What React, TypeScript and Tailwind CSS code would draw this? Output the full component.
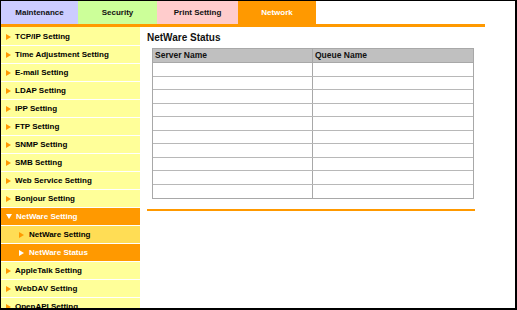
import React from 'react';

const tabs = [
  { label: 'Maintenance', w: 'w-[77px]', bg: 'bg-[#ccccff]', text: 'text-[#111]' },
  { label: 'Security', w: 'w-[79px]', bg: 'bg-[#ccff99]', text: 'text-[#111]' },
  { label: 'Print Setting', w: 'w-[81px]', bg: 'bg-[#ffcccc]', text: 'text-[#111]' },
  { label: 'Network', w: 'w-[78px]', bg: 'bg-[#ff9900]', text: 'text-white' },
];

type Item = { label: string; kind: 'normal' | 'open' | 'sub' | 'subActive' };

const menu: Item[] = [
  { label: 'TCP/IP Setting', kind: 'normal' },
  { label: 'Time Adjustment Setting', kind: 'normal' },
  { label: 'E-mail Setting', kind: 'normal' },
  { label: 'LDAP Setting', kind: 'normal' },
  { label: 'IPP Setting', kind: 'normal' },
  { label: 'FTP Setting', kind: 'normal' },
  { label: 'SNMP Setting', kind: 'normal' },
  { label: 'SMB Setting', kind: 'normal' },
  { label: 'Web Service Setting', kind: 'normal' },
  { label: 'Bonjour Setting', kind: 'normal' },
  { label: 'NetWare Setting', kind: 'open' },
  { label: 'NetWare Setting', kind: 'sub' },
  { label: 'NetWare Status', kind: 'subActive' },
  { label: 'AppleTalk Setting', kind: 'normal' },
  { label: 'WebDAV Setting', kind: 'normal' },
  { label: 'OpenAPI Setting', kind: 'normal' },
];

function RightArrow({ color }: { color: string }) {
  return (
    <svg width="5" height="6" viewBox="0 0 5 6" className="shrink-0">
      <polygon points="0,0 5,3 0,6" fill={color} />
    </svg>
  );
}

function DownArrow() {
  return (
    <svg width="6" height="5" viewBox="0 0 6 5" className="shrink-0">
      <polygon points="0,0 6,0 3,5" fill="#ffffff" />
    </svg>
  );
}

function MenuRow({ item }: { item: Item }) {
  if (item.kind === 'open') {
    return (
      <div className="h-[18px] border-b border-white bg-[#ff9900] flex items-center pl-[5px] gap-[4px] text-white">
        <DownArrow />
        <span>{item.label}</span>
      </div>
    );
  }
  if (item.kind === 'sub') {
    return (
      <div className="h-[18px] border-b border-white bg-[#ffdd55] flex items-center pl-[18px] gap-[5px] text-black">
        <RightArrow color="#ff9900" />
        <span>{item.label}</span>
      </div>
    );
  }
  if (item.kind === 'subActive') {
    return (
      <div className="h-[18px] border-b border-white bg-[#ff9900] flex items-center pl-[18px] gap-[5px] text-white">
        <RightArrow color="#ffffff" />
        <span>{item.label}</span>
      </div>
    );
  }
  return (
    <div className="h-[18px] border-b border-white bg-[#ffff99] flex items-center pl-[5px] gap-[4px] text-black">
      <RightArrow color="#ff9900" />
      <span>{item.label}</span>
    </div>
  );
}

export default function App() {
  const rows = Array.from({ length: 10 });
  return (
    <div
      className="w-[517px] h-[310px] overflow-hidden bg-white border-l border-t border-r-2 border-b-2 border-black font-bold"
      style={{ fontFamily: '"Liberation Sans", Arial, sans-serif' }}
    >
      {/* tabs */}
      <div className="flex h-[23px]">
        {tabs.map((t) => (
          <div
            key={t.label}
            className={`${t.w} ${t.bg} ${t.text} flex items-center justify-center text-[8px]`}
          >
            {t.label}
          </div>
        ))}
      </div>
      <div className="h-[3px] w-[484px] bg-[#ff9900]" />

      <div className="flex">
        {/* sidebar */}
        <div className="w-[139px] shrink-0 pt-[1px] bg-[#ffff99] text-[8px] leading-none">
          {menu.map((m, i) => (
            <MenuRow key={i} item={m} />
          ))}
        </div>

        {/* main */}
        <div className="pl-[7px] pt-[5px]">
          <h1 className="text-[10px] leading-[12px] text-[#111]">NetWare Status</h1>
          <div className="ml-[5px] mt-[4px] w-[322px] border border-[#a8a8a8] text-[8.5px] text-[#111]">
            <div className="flex h-[14px] bg-[#c0c0c0] border-b border-[#a8a8a8]">
              <div className="w-[160px] border-r border-[#a8a8a8] pl-[2px] flex items-center">Server Name</div>
              <div className="flex-1 pl-[2px] flex items-center">Queue Name</div>
            </div>
            {rows.map((_, i) => (
              <div
                key={i}
                className={`flex h-[13.5px] ${i < rows.length - 1 ? 'border-b border-[#b8b8b8]' : ''}`}
              >
                <div className="w-[160px] border-r border-[#a8a8a8]" />
                <div className="flex-1" />
              </div>
            ))}
          </div>
          <div className="mt-[10px] h-[2px] w-[328px] bg-[#ff9900]" />
        </div>
      </div>
    </div>
  );
}
